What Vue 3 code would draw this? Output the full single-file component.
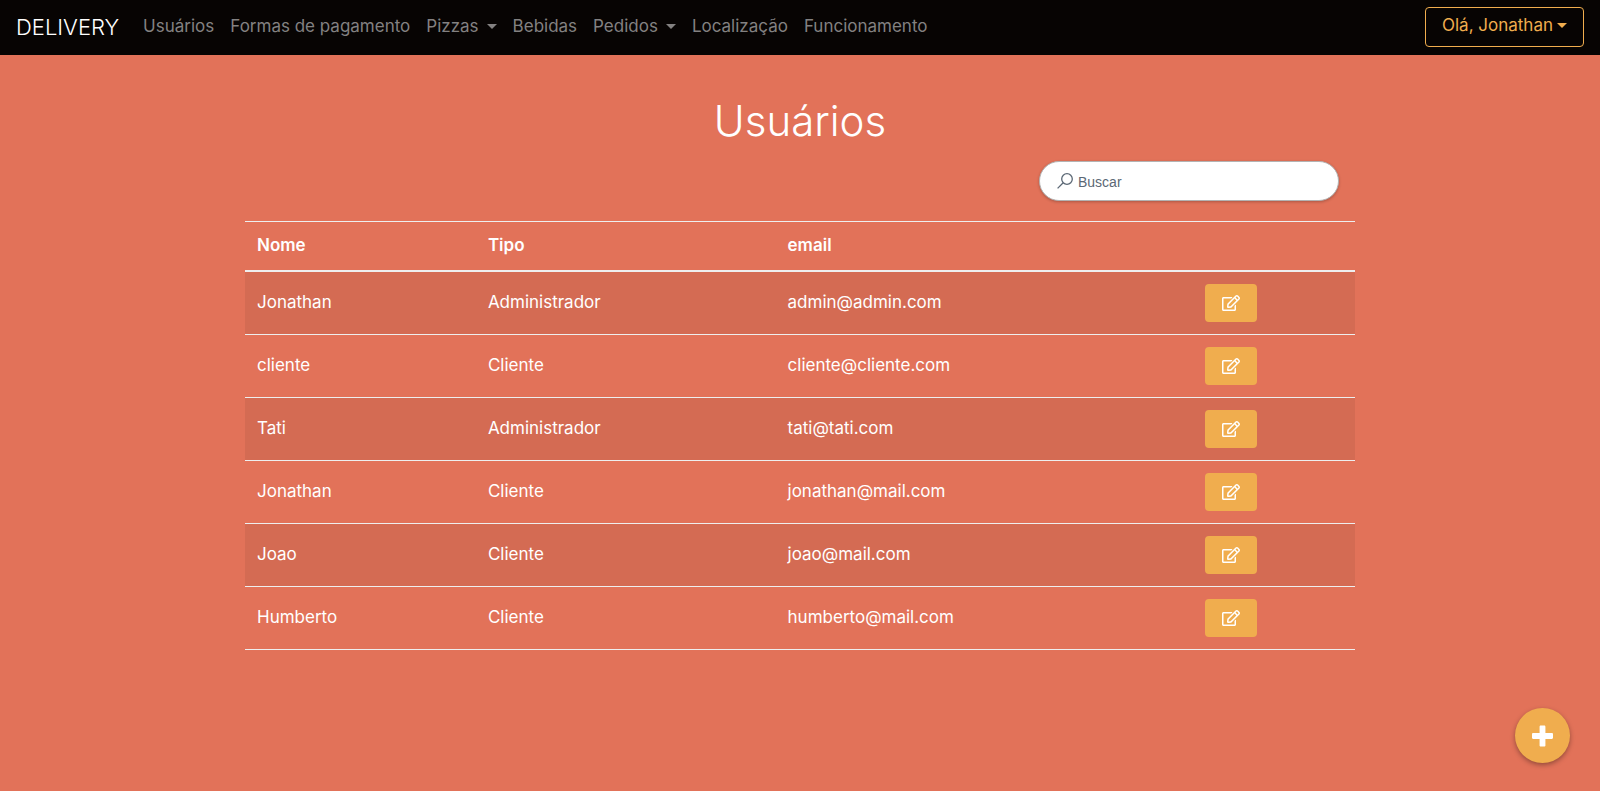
<script setup>
import { ref, computed } from 'vue'

const links = [
  { label: 'Usuários' },
  { label: 'Formas de pagamento' },
  { label: 'Pizzas', menu: true },
  { label: 'Bebidas' },
  { label: 'Pedidos', menu: true },
  { label: 'Localização' },
  { label: 'Funcionamento' },
]

const users = [
  { name: 'Jonathan', type: 'Administrador', email: 'admin@admin.com' },
  { name: 'cliente', type: 'Cliente', email: 'cliente@cliente.com' },
  { name: 'Tati', type: 'Administrador', email: 'tati@tati.com' },
  { name: 'Jonathan', type: 'Cliente', email: 'jonathan@mail.com' },
  { name: 'Joao', type: 'Cliente', email: 'joao@mail.com' },
  { name: 'Humberto', type: 'Cliente', email: 'humberto@mail.com' },
]

const search = ref('')
const filtered = computed(() => {
  const term = search.value.toLowerCase()
  return users.filter((u) => (u.name + ' ' + u.type + ' ' + u.email).toLowerCase().includes(term))
})
</script>

<template>
  <div class="page">
    <header class="navbar">
      <a class="brand" href="#">DELIVERY</a>
      <nav class="links">
        <a v-for="link in links" :key="link.label" class="link" href="#">
          {{ link.label }}<span v-if="link.menu" class="caret"></span>
        </a>
      </nav>
      <button class="account" type="button">Olá, Jonathan<span class="caret"></span></button>
    </header>

    <main class="container">
      <h1 class="title">Usuários</h1>

      <label class="search">
        <svg class="search-icon" viewBox="0 0 16 16" aria-hidden="true">
          <circle cx="10" cy="6" r="5.3" />
          <path d="M6.2 9.8 0.6 15.4" />
        </svg>
        <input v-model="search" type="text" placeholder="Buscar" aria-label="Buscar" />
      </label>

      <table class="table">
        <colgroup>
          <col class="col-name" />
          <col class="col-type" />
          <col class="col-email" />
          <col />
        </colgroup>
        <thead>
          <tr>
            <th>Nome</th>
            <th>Tipo</th>
            <th>email</th>
            <th></th>
          </tr>
        </thead>
        <tbody>
          <tr v-for="user in filtered" :key="user.email">
            <td>{{ user.name }}</td>
            <td>{{ user.type }}</td>
            <td>{{ user.email }}</td>
            <td class="actions">
              <button class="edit" type="button" aria-label="Editar">
                <svg viewBox="0 0 576 512" aria-hidden="true">
                  <path d="M402.3 344.9l32-32c5-5 13.700-1.500 13.700 5.700V464c0 26.500-21.500 48-48 48H48c-26.500 0-48-21.500-48-48V112c0-26.500 21.500-48 48-48h273.500c7.100 0 10.700 8.600 5.700 13.700l-32 32c-1.500 1.500-3.500 2.300-5.700 2.300H48v352h352V350.500c0-2.100.8-4.100 2.300-5.600zm156.600-201.800L296.300 405.700l-90.400 10c-26.200 2.900-48.500-19.200-45.600-45.600l10-90.400L432.900 17.100c22.900-22.900 59.900-22.900 82.700 0l43.200 43.200c22.900 22.900 22.900 60 .1 82.800zM460.100 174L402 115.900 216.200 301.800l-7.300 65.300 65.300-7.300L460.100 174zm64.800-79.700l-43.200-43.200c-4.100-4.100-10.800-4.100-14.800 0L436 82l58.100 58.100 30.900-30.900c4-4.200 4-10.800-.1-14.900z" />
                </svg>
              </button>
            </td>
          </tr>
        </tbody>
      </table>
    </main>

    <button class="add" type="button" aria-label="Adicionar">
      <svg viewBox="0 0 448 512" aria-hidden="true">
        <path d="M448 294.200v-76.400c0-13.300-10.700-24-24-24H286.200V56c0-13.300-10.700-24-24-24h-76.400c-13.300 0-24 10.700-24 24v137.800H24c-13.300 0-24 10.700-24 24v76.400c0 13.300 10.700 24 24 24h137.800V456c0 13.300 10.700 24 24 24h76.400c13.300 0 24-10.700 24-24V318.200H424c13.300 0 24-10.700 24-24z" />
      </svg>
    </button>
  </div>
</template>

<style>
body {
  margin: 0;
  background: #e27259;
}
</style>

<style scoped>
.page {
  min-height: 100vh;
  color: #fff;
  font-family: Inter, "Open Sans", sans-serif;
  font-size: 17px;
  line-height: 24px;
}

*,
*::before,
*::after {
  box-sizing: border-box;
}

button {
  font: inherit;
  cursor: pointer;
}

.navbar {
  display: flex;
  align-items: center;
  padding: 7px 16px 8px;
  background: #070403;
}

.brand {
  margin-right: 16px;
  color: #fff;
  font-size: 22px;
  font-weight: 300;
  line-height: 30px;
  text-decoration: none;
}

.links {
  display: flex;
  flex: 1;
}

.link {
  padding: 7px 8px 9px;
  color: #838181;
  white-space: nowrap;
  text-decoration: none;
}

.caret {
  display: inline-block;
  margin-left: 8px;
  vertical-align: 3px;
  border-top: 5px solid;
  border-right: 5px solid transparent;
  border-left: 5px solid transparent;
}

.account {
  padding: 5px 16px 9px;
  border: 1px solid #f0ad4e;
  border-radius: 4px;
  background: transparent;
  color: #f0ad4e;
}

.account .caret {
  margin-left: 4px;
}

.container {
  display: flex;
  flex-direction: column;
  max-width: 1140px;
  margin: 0 auto;
  padding: 42px 15px 0;
}

.title {
  margin: 0 0 16px;
  font-size: 42px;
  font-weight: 300;
  line-height: 48px;
  text-align: center;
}

.search {
  display: flex;
  align-self: flex-end;
  align-items: center;
  gap: 5px;
  width: 300px;
  height: 40px;
  margin: 0 16px 20px 0;
  padding: 0 17px;
  border: 1px solid #b3b3b3;
  border-radius: 20px;
  background: #fff;
  box-shadow: 0 1px 3px rgba(0, 0, 0, 0.24);
}

.search-icon {
  flex: none;
  width: 16px;
  height: 16px;
  fill: none;
  stroke: #5b6875;
  stroke-width: 1.3;
}

.search input {
  flex: 1;
  min-width: 0;
  padding: 2px 0 0;
  border: 0;
  outline: 0;
  background: transparent;
  color: #495057;
  font: 14px "Liberation Sans", Arial, sans-serif;
}

.search input::placeholder {
  color: #5b6875;
  opacity: 1;
}

.table {
  width: 100%;
  table-layout: fixed;
  border-spacing: 0;
  border-top: 1px solid #eee;
}

.col-name {
  width: 20.8%;
}

.col-type {
  width: 27%;
}

.col-email {
  width: 29.9%;
}

th,
td {
  padding: 11px 12px 13px;
  border-bottom: 1px solid #eee;
  text-align: left;
  vertical-align: middle;
}

th {
  border-bottom-width: 2px;
  font-weight: 600;
}

tbody tr:nth-child(odd) {
  background: rgba(0, 0, 0, 0.06);
}

.actions {
  padding: 12px;
  text-align: center;
}

.edit {
  display: inline-flex;
  align-items: center;
  justify-content: center;
  width: 52px;
  height: 38px;
  padding: 0;
  border: 0;
  border-radius: 4px;
  background: #f0ad4e;
  vertical-align: top;
}

.edit svg {
  width: 18px;
  height: 16px;
  fill: #fff;
}

.add {
  position: fixed;
  right: 30px;
  bottom: 28px;
  display: flex;
  align-items: center;
  justify-content: center;
  width: 55px;
  height: 55px;
  padding: 0;
  border: 0;
  border-radius: 50%;
  background: #f0ad4e;
  box-shadow: 0 2px 5px rgba(0, 0, 0, 0.35);
}

.add svg {
  width: 21px;
  height: 24px;
  fill: #fff;
}
</style>
